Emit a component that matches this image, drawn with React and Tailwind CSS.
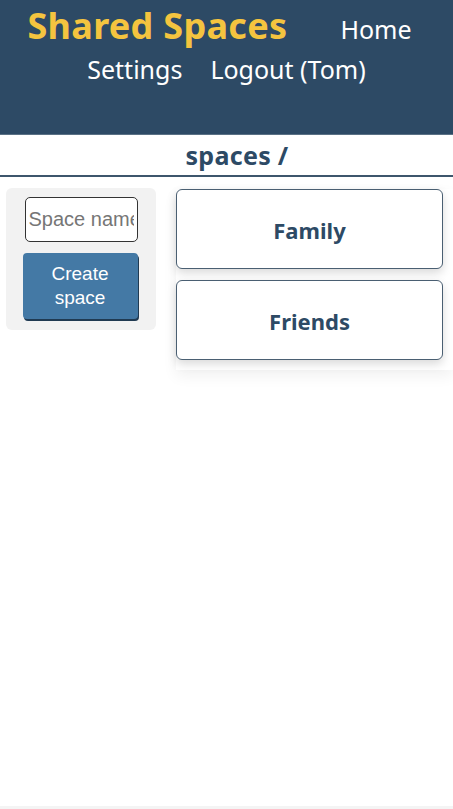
export default function App() {
  const font = { fontFamily: '"Noto Sans", "Open Sans", sans-serif' };
  return (
    <div className="min-h-[809px] bg-white flex flex-col" style={font}>
      <header className="h-[135px] bg-[#2d4a65] border-b border-[#5a7185] pt-[3px]">
        <nav className="flex flex-wrap justify-center items-baseline">
          <span className="text-[36px] font-bold text-[#f4c43f] leading-[46px] mr-[39px] tracking-[0.3px]">Shared Spaces</span>
          <a className="text-[25px] text-white leading-[40px] px-[14px]">Home</a>
          <a className="text-[25px] text-white leading-[40px] px-[14px]">Settings</a>
          <a className="text-[25px] text-white leading-[40px] px-[14px]">Logout (Tom)</a>
        </nav>
      </header>
      <h1 className="text-center text-[25px] font-bold text-[#2d4a65] leading-[40px] border-b-2 border-[#3d566c] tracking-[0.3px] pl-[21px]">spaces /</h1>
      <div className="flex items-start pt-[11px]">
        <div className="ml-[6px] w-[150px] bg-[#f2f2f2] rounded-md flex flex-col items-center pt-[9px] pb-[11px] gap-[11px]">
          <input
            placeholder="Space name"
            className="w-[113px] h-[45px] border border-[#333] rounded-[5px] bg-white px-[3px] text-[20px] text-[#333] placeholder:text-[#767676] outline-none"
            style={{ fontFamily: '"Liberation Sans", Arial, sans-serif' }}
          />
          <button
            className="w-[115px] h-[66px] bg-[#4479a5] text-white text-[19px] leading-[24px] rounded-[4px] shadow-[1px_2px_0_#203a52] -ml-[2px]"
            style={{ fontFamily: '"Liberation Sans", Arial, sans-serif' }}
          >
            Create<br />space
          </button>
        </div>
        <div className="ml-[20px] mt-[1px] flex-1 pr-[10px] pb-[10px] flex flex-col gap-[11px] shadow-[0_6px_14px_rgba(0,0,0,0.06)]">
          {["Family", "Friends"].map((n) => (
            <div
              key={n}
              className="h-[80px] border border-[#4a5f72] rounded-[6px] bg-white flex items-center justify-center pt-[3px] text-[22px] font-bold text-[#2d4a65] shadow-[0_4px_10px_rgba(0,0,0,0.15)]"
            >
              {n}
            </div>
          ))}
        </div>
      </div>
      <div className="flex-1" />
      <div className="h-[3px] bg-[#f4f4f4]" />
    </div>
  );
}
